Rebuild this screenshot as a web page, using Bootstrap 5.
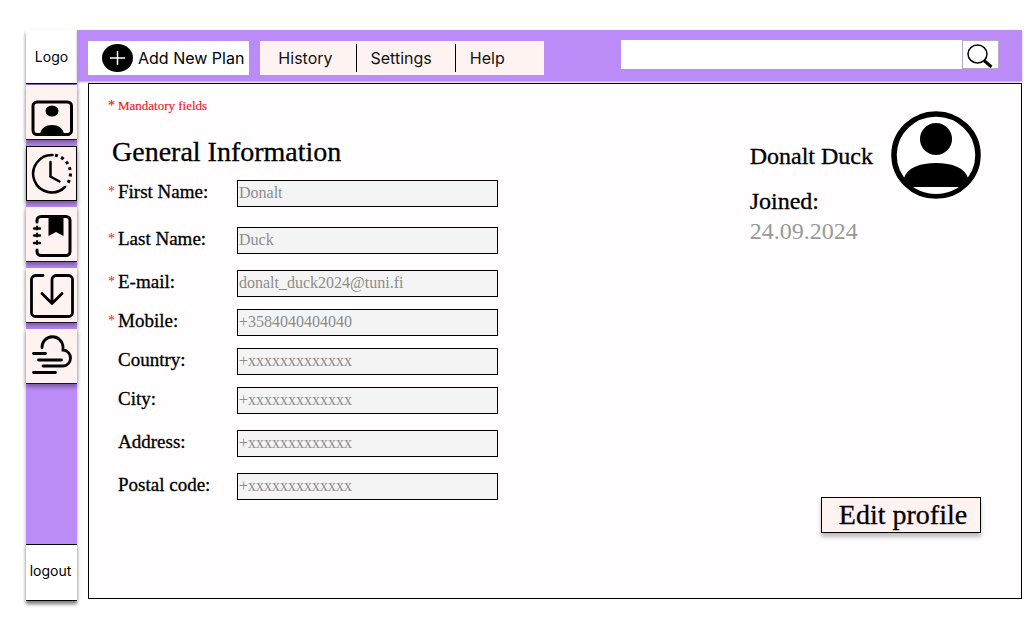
<!DOCTYPE html>
<html lang="en">
<head>
<meta charset="utf-8">
<meta name="viewport" content="width=device-width, initial-scale=1">
<title>Profile</title>
<link href="https://cdn.jsdelivr.net/npm/bootstrap@5.3.0/dist/css/bootstrap.min.css" rel="stylesheet">
<style>
  :root { --violet: #bb8bf7; --blush: #fff3f2; --paper: #fffdfe; }
  body { font-family: Inter, "Liberation Sans", sans-serif; font-size: 16px; line-height: 20px; color: #000; background: #fff; }
  .shell { padding: 30px 14px 26px 26px; }
  .side { width: 51px; background: var(--violet); box-shadow: 0 3px 4px rgba(0,0,0,.3); }
  .side-end { height: 54px; background: #fff; font-size: 14px; color: #000; text-decoration: none; border-bottom: 1px solid #000; box-shadow: 0 3px 3px rgba(0,0,0,.3); }
  .side-out { height: 57px; border-top: 1px solid #000; padding: 0 2px 3px 0; }
  .side-list { gap: 6px; padding-top: 1px; }
  .side-tile { height: 55px; background: var(--blush); border-bottom: 1px solid #201028; box-shadow: 0 3px 4px rgba(0,0,0,.35); }
  .side-tile.active { border: 1px solid #000; }
  .side-tile svg { width: 44px; height: 48px; }
  .topbar { min-height: 51px; padding: 11px 23px 6px 11px; gap: 11px; background: var(--violet); box-shadow: 0 1px 2px rgba(0,0,0,.35); }
  .plan { height: 34px; background: #fff; border: 0; padding: 0 5px 0 14px; gap: 5px; }
  .menu { height: 34px; background: var(--blush); padding: 3px 24px 3px 4px; }
  .menu a { color: #111; text-decoration: none; padding: 4px 23px 4px 14px; }
  .menu a + a { border-left: 1px solid #000; }
  .menu a:last-child { padding-right: 15px; }
  .find { width: 378px; height: 29px; margin-top: -1px; }
  .find input { border: 0; background: #fff; min-width: 0; }
  .find button { width: 37px; background: #fff; border: 1px solid #b9a9c9; padding: 0; }
  .panel { margin: 2px 0 2px 11px; background: var(--paper); border: 1px solid #000; padding: 12px 40px 65px 19px; font-family: "Liberation Serif", serif; }
  .note { font-size: 13px; color: #f0202a; -webkit-text-stroke: 0.2px #f0202a; }
  .star { width: 10px; font-size: 14px; color: #f0202a; }
  h1 { font-size: 28px; line-height: 32px; margin: 20px 0 12px 4px; font-weight: 400; -webkit-text-stroke: 0.3px #000; }
  .field-row label { width: 119px; font-size: 19px; -webkit-text-stroke: 0.3px #000; }
  .field-row label, .field-row .star { padding-bottom: 4px; }
  .field-row input { width: 261px; height: 27px; background: #f4f4f4; border: 1px solid #000; padding: 0 1px 2px; font-size: 16px; color: #8c8c8c; }
  .after-lg { margin-bottom: 20px; }
  .after-md { margin-bottom: 16px; }
  .after-sm { margin-bottom: 12px; }
  .who { font-size: 24px; line-height: 30px; gap: 18px; padding-top: 15px; }
  .who-text { padding-top: 30px; }
  .who-name { margin-bottom: 15px; -webkit-text-stroke: 0.3px #000; }
  .who-join { -webkit-text-stroke: 0.3px #000; }
  .who-date { color: #999; }
  .edit { width: 160px; height: 36px; background: var(--blush); border: 1px solid #000; font-size: 28px; line-height: 32px; padding: 0 0 0 4px; box-shadow: 0 4px 4px rgba(0,0,0,.25); -webkit-text-stroke: 0.3px #000; }
</style>
</head>
<body>
<div class="shell d-flex min-vh-100">
  <aside class="side d-flex flex-column flex-shrink-0">
    <a href="#" class="side-end d-flex align-items-center justify-content-center">Logo</a>
    <nav class="side-list d-flex flex-column" aria-label="Sections">
      <a href="#" class="side-tile d-flex align-items-center justify-content-center" aria-label="Profile">
        <svg viewBox="0 0 44 48"><rect x="3" y="14" width="38.500" height="32.500" rx="4" fill="none" stroke="#000" stroke-width="3"/><ellipse cx="22" cy="23" rx="6.500" ry="5.500"/><path d="M10 46c1-6 6-9 12-9s11 3 12 9z"/></svg>
      </a>
      <a href="#" class="side-tile active d-flex align-items-center justify-content-center" aria-label="History">
        <svg viewBox="0 0 44 48" fill="none" stroke="#000" stroke-width="2.500" stroke-linecap="round"><path d="M22.500 5a18.700 18.700 0 1 0 12.500 32"/><path d="M25 5.200a18.700 18.700 0 0 1 11 30.500" stroke-width="3" stroke-linecap="butt" stroke-dasharray="3 3.500"/><path d="M20.500 12v14.500l9 5"/></svg>
      </a>
      <a href="#" class="side-tile d-flex align-items-center justify-content-center" aria-label="Journal">
        <svg viewBox="0 0 44 48" fill="none" stroke="#000" stroke-width="3" stroke-linecap="round"><path d="M7 12v-1.500a4 4 0 0 1 4-4h25a4 4 0 0 1 4 4v31a4 4 0 0 1-4 4H11a4 4 0 0 1-4-4V40"/><path d="M4 18.500h6M4 25.500h6M4 33h6" stroke-width="2.500"/><path d="M7 16.500v3M7 23.500v3M7 31v3" stroke-width="2"/><path d="M18.500 7h15v19l-7.500-4-7.500 4z" fill="#000" stroke="none"/></svg>
      </a>
      <a href="#" class="side-tile d-flex align-items-center justify-content-center" aria-label="Downloads">
        <svg viewBox="0 0 44 48" fill="none" stroke="#000" stroke-width="2.800" stroke-linecap="round" stroke-linejoin="round"><path d="M13 4.500H5.500a4 4 0 0 0-4 4v33a4 4 0 0 0 4 4h33a4 4 0 0 0 4-4v-33a4 4 0 0 0-4-4H26a4 4 0 0 0-4 4v24M12 22.500l10 10 10-10"/></svg>
      </a>
      <a href="#" class="side-tile d-flex align-items-center justify-content-center" aria-label="Weather">
        <svg viewBox="0 0 44 48" fill="none" stroke="#000" stroke-width="2.800" stroke-linecap="round"><path d="M12 15.500a10.500 10.500 0 0 1 21-.5v3a7.500 8 0 0 1 0 16H13M3.500 21.500h12M8.500 28h23M3.500 40.500h22"/></svg>
      </a>
    </nav>
    <a href="#" class="side-end side-out mt-auto d-flex align-items-center justify-content-center">logout</a>
  </aside>

  <div class="flex-grow-1 d-flex flex-column">
    <header class="topbar d-flex align-items-start">
      <button type="button" class="plan d-flex align-items-center text-nowrap">
        <svg width="31" height="28" viewBox="0 0 31 28"><ellipse cx="15.500" cy="14" rx="15.500" ry="14"/><path d="M15.500 7v14M8 14h15" stroke="#fff" stroke-width="1.500"/></svg>
        Add New Plan
      </button>
      <nav class="menu d-flex" aria-label="Main">
        <a href="#">History</a><a href="#">Settings</a><a href="#">Help</a>
      </nav>
      <form class="find d-flex ms-auto">
        <input type="search" class="flex-grow-1" aria-label="Search">
        <button type="button" aria-label="Search" class="d-flex align-items-center justify-content-center">
          <svg width="28" height="26" viewBox="0 0 28 26" fill="none" stroke="#000"><ellipse cx="10.500" cy="12" rx="9.500" ry="9" stroke-width="1.500"/><path d="M17 18.500l7.500 6.500" stroke-width="3"/></svg>
        </button>
      </form>
    </header>

    <main class="panel flex-grow-1 d-flex justify-content-between">
      <form>
        <div class="note d-flex"><span class="star">*</span>Mandatory fields</div>
        <h1>General Information</h1>
        <div class="field-row after-lg d-flex align-items-center"><span class="star">*</span><label for="first">First Name:</label><input id="first" type="text" value="Donalt"></div>
        <div class="field-row after-md d-flex align-items-center"><span class="star">*</span><label for="last">Last Name:</label><input id="last" type="text" value="Duck"></div>
        <div class="field-row after-sm d-flex align-items-center"><span class="star">*</span><label for="mail">E-mail:</label><input id="mail" type="email" value="donalt_duck2024@tuni.fi"></div>
        <div class="field-row after-sm d-flex align-items-center"><span class="star">*</span><label for="mobile">Mobile:</label><input id="mobile" type="tel" value="+3584040404040"></div>
        <div class="field-row after-sm d-flex align-items-center"><span class="star"></span><label for="country">Country:</label><input id="country" type="text" value="+xxxxxxxxxxxxx"></div>
        <div class="field-row after-md d-flex align-items-center"><span class="star"></span><label for="city">City:</label><input id="city" type="text" value="+xxxxxxxxxxxxx"></div>
        <div class="field-row after-md d-flex align-items-center"><span class="star"></span><label for="address">Address:</label><input id="address" type="text" value="+xxxxxxxxxxxxx"></div>
        <div class="field-row d-flex align-items-center"><span class="star"></span><label for="postal">Postal code:</label><input id="postal" type="text" value="+xxxxxxxxxxxxx"></div>
      </form>
      <section class="d-flex flex-column justify-content-between align-items-end">
        <div class="who d-flex align-items-start">
          <div class="who-text">
            <div class="who-name">Donalt Duck</div>
            <div class="who-join">Joined:</div>
            <div class="who-date">24.09.2024</div>
          </div>
          <svg width="90" height="88" viewBox="0 0 90 88" role="img" aria-label="Avatar"><ellipse cx="45" cy="44" rx="42" ry="41" fill="#fff" stroke="#000" stroke-width="5.500"/><circle cx="45" cy="28" r="16"/><path d="M13 67c3-10 16-15 32-15s29 5 32 15l-8 9H21z" /><path d="M22 76h46c-6 4-14 7-23 7s-17-3-23-7z" fill="#fff"/></svg>
        </div>
        <button type="button" class="edit">Edit profile</button>
      </section>
    </main>
  </div>
</div>
<script src="https://cdn.jsdelivr.net/npm/bootstrap@5.3.0/dist/js/bootstrap.bundle.min.js"></script>
</body>
</html>
